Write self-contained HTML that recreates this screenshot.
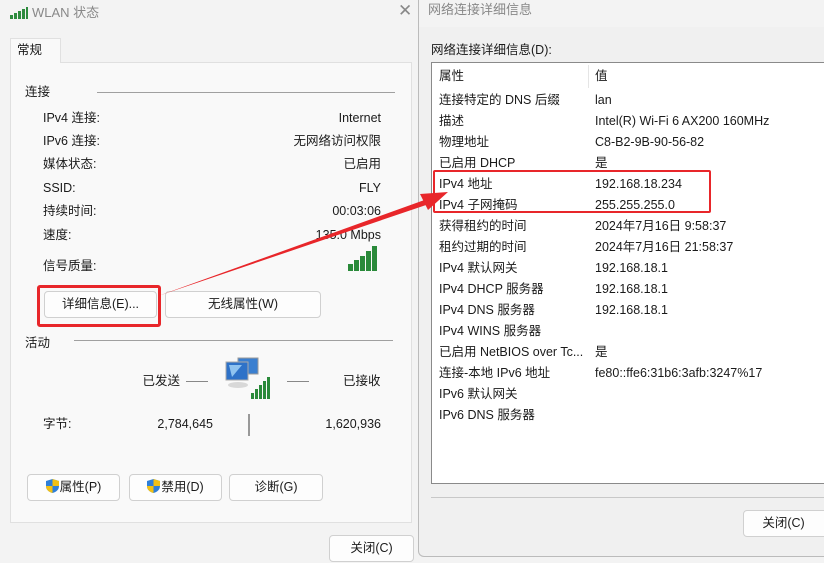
<!DOCTYPE html>
<html><head><meta charset="utf-8"><style>
*{margin:0;padding:0;box-sizing:border-box}
body{width:824px;height:563px;overflow:hidden;background:#f3f3f3;font-family:"Liberation Sans","Noto Sans CJK SC",sans-serif;font-size:12.5px;color:#1a1a1a;position:relative}
.a{position:absolute;white-space:nowrap;line-height:16px}
.r{text-align:right}
.btn{position:absolute;background:#fdfdfd;border:1px solid #d0d0d0;border-radius:4px;text-align:center;line-height:24px}
.hl{position:absolute;height:1px;background:#a0a0a0}
.sh{display:inline-block;vertical-align:-2px;margin-right:1px}
</style></head><body>
<div style="position:absolute;left:0;top:0;width:418px;height:563px;background:#f3f3f3"></div>
<svg class="a" style="left:10px;top:7px" width="18" height="12"><g fill="#2e8b3e"><rect x="0" y="8" width="3" height="4"/><rect x="4" y="6" width="3" height="6"/><rect x="8" y="4" width="3" height="8"/><rect x="12" y="2" width="3" height="10"/><rect x="16" y="0" width="2" height="12"/></g></svg>
<div class="a" style="left:32px;top:5px;color:#888;font-size:13px">WLAN 状态</div>
<div class="a" style="left:398px;top:3px;color:#888;font-size:17px">✕</div>
<div style="position:absolute;left:10px;top:62px;width:402px;height:461px;background:#f9f9f9;border:1px solid #e0e0e0"></div>
<div style="position:absolute;left:10px;top:38px;width:51px;height:25px;background:#f9f9f9;border:1px solid #e0e0e0;border-bottom:none"></div>
<div class="a" style="left:17px;top:42px">常规</div>
<div class="a" style="left:25px;top:84px">连接</div><div class="hl" style="left:97px;top:92px;width:298px"></div>
<div class="a" style="left:43px;top:110px">IPv4 连接:</div><div class="a r" style="right:443px;top:110px">Internet</div>
<div class="a" style="left:43px;top:133px">IPv6 连接:</div><div class="a r" style="right:443px;top:133px">无网络访问权限</div>
<div class="a" style="left:43px;top:156px">媒体状态:</div><div class="a r" style="right:443px;top:156px">已启用</div>
<div class="a" style="left:43px;top:180px">SSID:</div><div class="a r" style="right:443px;top:180px">FLY</div>
<div class="a" style="left:43px;top:203px">持续时间:</div><div class="a r" style="right:443px;top:203px">00:03:06</div>
<div class="a" style="left:43px;top:227px">速度:</div><div class="a r" style="right:443px;top:227px">135.0 Mbps</div>
<div class="a" style="left:43px;top:258px">信号质量:</div>
<svg class="a" style="left:348px;top:246px" width="31" height="26"><g fill="#2a8a3a"><rect x="0" y="18" width="5" height="7"/><rect x="6" y="14" width="5" height="11"/><rect x="12" y="10" width="5" height="15"/><rect x="18" y="5" width="5" height="20"/><rect x="24" y="0" width="5" height="25"/></g></svg>
<div class="btn" style="left:44px;top:291px;width:113px;height:27px">详细信息(E)...</div>
<div class="btn" style="left:165px;top:291px;width:156px;height:27px">无线属性(W)</div>
<div style="position:absolute;left:37px;top:285px;width:124px;height:42px;border:3px solid #e8262a;border-radius:3px"></div>
<div class="a" style="left:25px;top:335px">活动</div><div class="hl" style="left:74px;top:340px;width:319px"></div>
<div class="a r" style="right:644px;top:373px">已发送</div>
<div class="hl" style="left:186px;top:381px;width:22px;background:#888"></div>
<svg class="a" style="left:224px;top:357px" width="48" height="43"><rect x="14" y="1" width="20" height="16" fill="#3a7fd0" stroke="#999"/><rect x="2" y="5" width="22" height="18" fill="#2e72c8" stroke="#aaa"/><path d="M5 8 L18 8 L8 20 Z" fill="#8fc3f0"/><ellipse cx="14" cy="28" rx="10" ry="3" fill="#d8d8d8"/><g fill="#2a8a3a"><rect x="27" y="36" width="3" height="6"/><rect x="31" y="32" width="3" height="10"/><rect x="35" y="28" width="3" height="14"/><rect x="39" y="24" width="3" height="18"/><rect x="43" y="20" width="3" height="22"/></g></svg>
<div class="hl" style="left:287px;top:381px;width:22px;background:#888"></div>
<div class="a" style="left:343px;top:373px">已接收</div>
<div class="a" style="left:43px;top:416px">字节:</div>
<div class="a r" style="right:611px;top:416px">2,784,645</div>
<div style="position:absolute;left:248px;top:414px;width:2px;height:22px;background:#999"></div>
<div class="a r" style="right:443px;top:416px">1,620,936</div>
<div class="btn" style="left:27px;top:474px;width:93px;height:27px"><svg class="sh" width="13" height="14"><path d="M6.5 0 L13 2 L13 7 Q13 12 6.5 14 Q0 12 0 7 L0 2 Z" fill="#2f7fd8"/><path d="M6.5 0 L13 2 L13 7 L6.5 7 Z M0 7 L6.5 7 L6.5 14 Q0 12 0 7Z" fill="#f2c014"/></svg>属性(P)</div>
<div class="btn" style="left:129px;top:474px;width:93px;height:27px"><svg class="sh" width="13" height="14"><path d="M6.5 0 L13 2 L13 7 Q13 12 6.5 14 Q0 12 0 7 L0 2 Z" fill="#2f7fd8"/><path d="M6.5 0 L13 2 L13 7 L6.5 7 Z M0 7 L6.5 7 L6.5 14 Q0 12 0 7Z" fill="#f2c014"/></svg>禁用(D)</div>
<div class="btn" style="left:229px;top:474px;width:94px;height:27px">诊断(G)</div>
<div class="btn" style="left:329px;top:535px;width:85px;height:27px">关闭(C)</div>
<div style="position:absolute;left:418px;top:0;width:420px;height:557px;background:#f0f0f0;border-left:1px solid #bbb;border-bottom:1px solid #bbb;border-radius:0 0 0 6px"></div>
<div style="position:absolute;left:419px;top:0;width:405px;height:27px;background:#f3f3f3"></div>
<div class="a" style="left:428px;top:2px;color:#888;font-size:13px">网络连接详细信息</div>
<div class="a" style="left:431px;top:42px">网络连接详细信息(D):</div>
<div style="position:absolute;left:431px;top:62px;width:400px;height:422px;background:#fff;border:1px solid #8a8a8a"></div>
<div style="position:absolute;left:588px;top:65px;width:1px;height:23px;background:#e5e5e5"></div>
<div class="a" style="left:439px;top:68px">属性</div><div class="a" style="left:595px;top:68px">值</div>
<div style="position:absolute;left:439px;top:90px;line-height:21px">连接特定的 DNS 后缀<br>描述<br>物理地址<br>已启用 DHCP<br>IPv4 地址<br>IPv4 子网掩码<br>获得租约的时间<br>租约过期的时间<br>IPv4 默认网关<br>IPv4 DHCP 服务器<br>IPv4 DNS 服务器<br>IPv4 WINS 服务器<br>已启用 NetBIOS over Tc...<br>连接-本地 IPv6 地址<br>IPv6 默认网关<br>IPv6 DNS 服务器</div>
<div style="position:absolute;left:595px;top:90px;line-height:21px">lan<br>Intel(R) Wi-Fi 6 AX200 160MHz<br>C8-B2-9B-90-56-82<br>是<br>192.168.18.234<br>255.255.255.0<br>2024年7月16日 9:58:37<br>2024年7月16日 21:58:37<br>192.168.18.1<br>192.168.18.1<br>192.168.18.1<br><br>是<br>fe80::ffe6:31b6:3afb:3247%17</div>
<div style="position:absolute;left:433px;top:170px;width:278px;height:43px;border:2.5px solid #e8262a;border-radius:2px"></div>
<div class="hl" style="left:431px;top:497px;width:393px;background:#c8c8c8"></div>
<div class="btn" style="left:743px;top:510px;width:90px;height:27px;padding-right:9px">关闭(C)</div>
<svg style="position:absolute;left:0;top:0" width="824" height="563"><polygon points="158,296 430,198 432,203" fill="#e8262a"/><polygon points="448,192 420,194 428,210" fill="#e8262a"/></svg>
</body></html>
